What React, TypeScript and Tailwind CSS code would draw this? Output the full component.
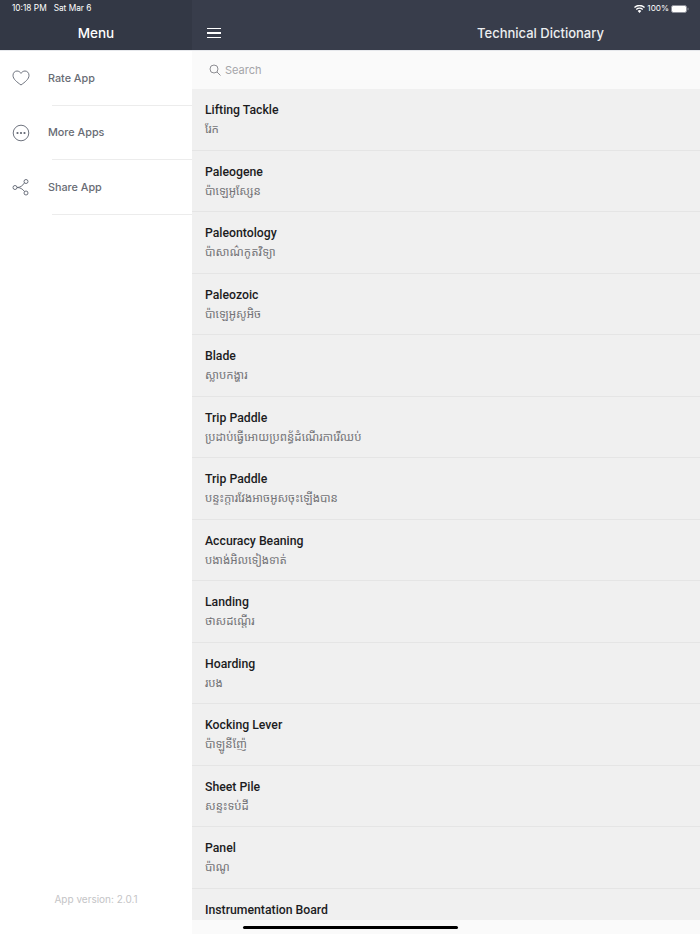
import React from "react";

const words = [
  ["Lifting Tackle", "រែក"],
  ["Paleogene", "ប៉ាឡេអូសែ្សន"],
  ["Paleontology", "ប៉ាសាណ៌កូតវិទ្យា"],
  ["Paleozoic", "ប៉ាឡេអូសូអិច"],
  ["Blade", "ស្លាបកង្ហារ"],
  ["Trip Paddle", "ប្រដាប់ធ្វើអោយប្រពន្ធ័ដំណើរការើឈប់"],
  ["Trip Paddle", "បន្ទះក្តារវែងអាចអូសចុះឡើងបាន"],
  ["Accuracy Beaning", "បងាង់អិលទៀងទាត់"],
  ["Landing", "ថាសដណ្តើរ"],
  ["Hoarding", "របង"],
  ["Kocking Lever", "ប៉ាឡូនីញ៉ែ"],
  ["Sheet Pile", "សន្ទះទប់ដី"],
  ["Panel", "ប៉ាណូ"],
  ["Instrumentation Board", ""],
];

const HeartIcon = () => (
  <svg width="18" height="16" viewBox="0 0 18 16" fill="none" stroke="#5f6470" strokeWidth="0.9">
    <path d="M9 15C5 12 1 9.300 1 5.300 1 2.800 2.900 1 5 1c1.700 0 3.200 1 4 2.400C9.800 2 11.300 1 13 1c2.100 0 4 1.800 4 4.300C17 9.300 13 12 9 15z" />
  </svg>
);

const MoreIcon = () => (
  <svg width="18" height="18" viewBox="0 0 18 18" fill="none" stroke="#5f6470" strokeWidth="0.9">
    <circle cx="9" cy="9" r="7.800" />
    <circle cx="5.500" cy="9" r="1.100" fill="#5f6470" stroke="none" />
    <circle cx="9" cy="9" r="1.100" fill="#5f6470" stroke="none" />
    <circle cx="12.500" cy="9" r="1.100" fill="#5f6470" stroke="none" />
  </svg>
);

const ShareIcon = () => (
  <svg width="18" height="18" viewBox="0 0 18 18" fill="none" stroke="#5f6470" strokeWidth="0.9">
    <circle cx="3" cy="9.500" r="2" />
    <circle cx="14" cy="3.500" r="2" />
    <circle cx="14" cy="15" r="2" />
    <path d="M5 9.500c3 0 5.500-1.500 7.500-4.700M5 9.500c3 0 5.500 1.300 7.500 4" />
  </svg>
);

const menu = [
  ["Rate App", <HeartIcon />],
  ["More Apps", <MoreIcon />],
  ["Share App", <ShareIcon />],
] as const;

const App = () => {
  return (
    <div className="relative flex h-[934px] w-[700px] overflow-hidden bg-white font-['Inter',sans-serif]">
      {/* Left menu */}
      <aside className="flex w-[192px] shrink-0 flex-col bg-white">
        <div className="h-[51px] shrink-0 border-b border-[#e6e8ec] bg-[#333845] text-white">
          <div className="h-[19px] pl-[12px] pt-[3px] text-[8.300px] leading-[11px]">10:18 PM&nbsp;&nbsp; Sat Mar 6</div>
          <div className="text-center text-[13.500px] font-medium leading-[28px]">Menu</div>
        </div>
        <div>
          {menu.map(([label, icon]) => (
            <div key={label as string} className="relative flex h-[54.600px] items-center pl-[12px]">
              <div className="flex w-[36px] items-center">{icon}</div>
              <span className="mt-[1px] text-[10.800px] font-medium text-[#686c74]">{label}</span>
              <div className="absolute bottom-0 left-[52px] right-0 h-px bg-[#ececec]" />
            </div>
          ))}
        </div>
        <div className="mt-auto pb-[28px] text-center text-[10px] leading-[13px] text-[#c4c4c6]">App version: 2.0.1</div>
      </aside>

      {/* Main column */}
      <main className="flex min-w-0 flex-1 flex-col">
        <header className="h-[51px] shrink-0 border-b border-[#e6e8ec] bg-[#383d4b] text-white">
          <div className="flex h-[19px] items-center justify-end gap-[2px] pb-[2px] pr-[11px] text-[8.200px] leading-[11px]">
            <svg width="11" height="8" viewBox="0 0 11 8" fill="white">
              <path d="M5.500 8 3.700 5.900a2.700 2.700 0 0 1 3.600 0zM2.700 4.900 1.800 3.900a5.500 5.500 0 0 1 7.400 0l-.9 1a4.200 4.200 0 0 0-5.600 0zM.9 2.900 0 1.900a8.200 8.200 0 0 1 11 0l-.9 1a6.900 6.900 0 0 0-9.200 0z" />
            </svg>
            <span>100%</span>
            <svg width="18" height="8" viewBox="0 0 18 8">
              <rect x="0.500" y="0.500" width="15" height="7" rx="1.800" fill="white" stroke="#8d909a" />
              <rect x="16.500" y="2.800" width="1" height="2.400" fill="#8d909a" />
            </svg>
          </div>
          <div className="flex h-[28px] items-center pl-[15px]">
            <div className="flex w-[14px] flex-col gap-[3px]">
              <div className="h-[1.500px] bg-white" />
              <div className="h-[1.500px] bg-white" />
              <div className="h-[1.500px] bg-white" />
            </div>
            <div className="flex-1 pl-[160px] pt-[1px] text-center text-[13px] font-medium text-[#eceef0]">Technical Dictionary</div>
          </div>
        </header>
        <div className="flex h-[38px] shrink-0 items-center gap-[4px] bg-[#fafafa] pl-[17px]">
          <svg width="12" height="12" viewBox="0 0 12 12" fill="none" stroke="#8e8e93" strokeWidth="1">
            <circle cx="5" cy="5" r="4" />
            <path d="M8 8l3.500 3.500" />
          </svg>
          <span className="text-[11px] text-[#a5a5a9]">Search</span>
        </div>
        <div className="min-h-0 flex-1 overflow-hidden bg-[#f0f0f0]">
          {words.map(([en, km], i) => (
            <div key={i} className="flex h-[61.500px] flex-col border-b border-[#e5e5e5] pl-[13px] pt-[12px]">
              <div className="font-['Roboto',sans-serif] text-[12.250px] font-medium leading-[18px] text-[#1c1c1e]">{en}</div>
              <div className="font-['Noto_Sans_Khmer','Noto_Sans','DejaVu_Sans',sans-serif] text-[11.500px] leading-[20px] text-[#737377]">{km}</div>
            </div>
          ))}
        </div>
      </main>

      {/* Home indicator */}
      <div className="absolute bottom-0 left-[192px] right-0 h-[14px] bg-[#fafafa]" />
      <div className="absolute bottom-[5px] left-[243px] h-[3px] w-[215px] rounded-full bg-black" />
    </div>
  );
};

export default App;
